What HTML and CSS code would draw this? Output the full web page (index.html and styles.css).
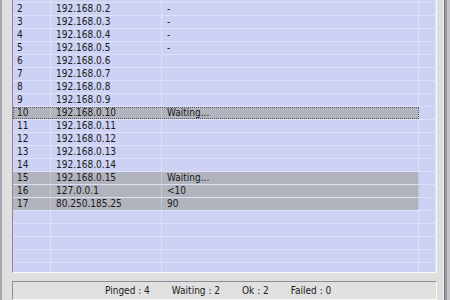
FILE: index.html
```html
<!DOCTYPE html>
<html lang="en">

<head>
    <meta charset="UTF-8">
    <title>Ping list</title>
    <link rel="stylesheet" href="styles.css">
</head>

<body>
    <div class="window">
        <div class="list">
            <div class="rows">
                <div class="row"><div class="item"><span class="c1">1</span><span class="c2">192.168.0.1</span><span class="c3">-</span></div><span class="c4"></span></div>
                <div class="row"><div class="item"><span class="c1">2</span><span class="c2">192.168.0.2</span><span class="c3">-</span></div><span class="c4"></span></div>
                <div class="row"><div class="item"><span class="c1">3</span><span class="c2">192.168.0.3</span><span class="c3">-</span></div><span class="c4"></span></div>
                <div class="row"><div class="item"><span class="c1">4</span><span class="c2">192.168.0.4</span><span class="c3">-</span></div><span class="c4"></span></div>
                <div class="row"><div class="item"><span class="c1">5</span><span class="c2">192.168.0.5</span><span class="c3">-</span></div><span class="c4"></span></div>
                <div class="row"><div class="item"><span class="c1">6</span><span class="c2">192.168.0.6</span><span class="c3"></span></div><span class="c4"></span></div>
                <div class="row"><div class="item"><span class="c1">7</span><span class="c2">192.168.0.7</span><span class="c3"></span></div><span class="c4"></span></div>
                <div class="row"><div class="item"><span class="c1">8</span><span class="c2">192.168.0.8</span><span class="c3"></span></div><span class="c4"></span></div>
                <div class="row"><div class="item"><span class="c1">9</span><span class="c2">192.168.0.9</span><span class="c3"></span></div><span class="c4"></span></div>
                <div class="row"><div class="item hit focus"><span class="c1">10</span><span class="c2">192.168.0.10</span><span class="c3">Waiting...</span></div><span class="c4"></span></div>
                <div class="row"><div class="item"><span class="c1">11</span><span class="c2">192.168.0.11</span><span class="c3"></span></div><span class="c4"></span></div>
                <div class="row"><div class="item"><span class="c1">12</span><span class="c2">192.168.0.12</span><span class="c3"></span></div><span class="c4"></span></div>
                <div class="row"><div class="item"><span class="c1">13</span><span class="c2">192.168.0.13</span><span class="c3"></span></div><span class="c4"></span></div>
                <div class="row"><div class="item"><span class="c1">14</span><span class="c2">192.168.0.14</span><span class="c3"></span></div><span class="c4"></span></div>
                <div class="row"><div class="item hit"><span class="c1">15</span><span class="c2">192.168.0.15</span><span class="c3">Waiting...</span></div><span class="c4"></span></div>
                <div class="row"><div class="item hit"><span class="c1">16</span><span class="c2">127.0.0.1</span><span class="c3">&lt;10</span></div><span class="c4"></span></div>
                <div class="row"><div class="item hit"><span class="c1">17</span><span class="c2">80.250.185.25</span><span class="c3">90</span></div><span class="c4"></span></div>
                <!-- empty rows to fill the list -->
                <div class="row"><div class="item"><span class="c1"></span><span class="c2"></span><span class="c3"></span></div><span class="c4"></span></div>
                <div class="row"><div class="item"><span class="c1"></span><span class="c2"></span><span class="c3"></span></div><span class="c4"></span></div>
                <div class="row"><div class="item"><span class="c1"></span><span class="c2"></span><span class="c3"></span></div><span class="c4"></span></div>
                <div class="row"><div class="item"><span class="c1"></span><span class="c2"></span><span class="c3"></span></div><span class="c4"></span></div>
                <div class="row"><div class="item"><span class="c1"></span><span class="c2"></span><span class="c3"></span></div><span class="c4"></span></div>
            </div>
        </div>
        <div class="status">
            <span>Pinged : 4</span>
            <span>Waiting : 2</span>
            <span>Ok : 2</span>
            <span>Failed : 0</span>
        </div>
    </div>
</body>

</html>
```

FILE: styles.css
```css
body {
    margin: 0;
    height: 300px;
    overflow: hidden;
    background: #dfdfdf;
    font-family: "DejaVu Sans Condensed", "DejaVu Sans", sans-serif;
    font-stretch: condensed;
    font-size: 10px;
    color: #1a1a1a;
}

.window {
    height: 300px;
    display: flex;
    flex-direction: column;
    padding: 0 13px 0 10px;
    border-left: 2px solid #a8a8b0;
    background: #dfdfdf;
    box-shadow: inset -3px 0 #c2c2c8, inset -5px 0 #9a9aa2, inset -6px 0 #6e6e78, inset -7px 0 #f4f4f4;
}

.list {
    margin-top: -11px;
    height: 282px;
    overflow: hidden;
    border: 1px solid;
    border-color: #8c8c96 #fafafa #fafafa #8c8c96;
    background: #cdd1f3;
}

.row {
    display: flex;
    height: 12px;
    border-bottom: 1px solid #dde0f7;
    line-height: 12px;
}

.item {
    display: flex;
}

.item.hit {
    background: #b1b3bd;
}

.item.focus {
    outline: 1px dotted #5a5a62;
    outline-offset: -1px;
}

.row span {
    border-right: 1px solid #dfe1f6;
    white-space: nowrap;
    overflow: hidden;
}

.c1 {
    width: 33px;
    padding-left: 4px;
}

.c2 {
    width: 105px;
    padding-left: 5px;
}

.c3 {
    width: 251px;
    padding-left: 5px;
}

.c4 {
    width: 16px;
}

.item.hit span {
    border-right-color: #c4c6d0;
}

.status {
    margin-top: 8px;
    flex: 1;
    display: flex;
    gap: 22px;
    padding: 3px 0 0 92px;
    border: 1px solid;
    border-color: #8c8c96 #fafafa #fafafa #8c8c96;
    background: #e0e0e0;
}
```
